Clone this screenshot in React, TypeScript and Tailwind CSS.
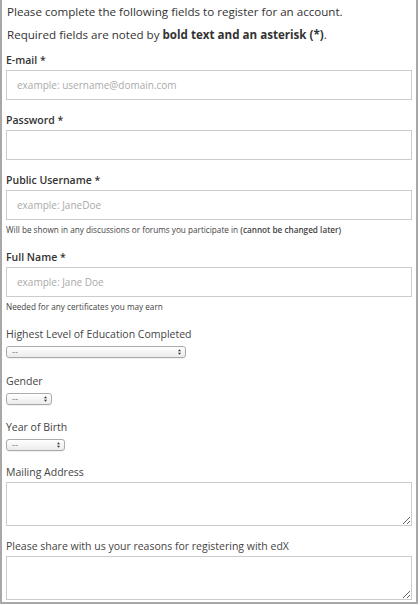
import React from "react";

const font = { fontFamily: '"Open Sans", "Noto Sans", sans-serif' };

function Label({ children, bold }: { children: React.ReactNode; bold?: boolean }) {
    return (
        <label className={`block text-[10.5px] leading-[16px] mb-[2px] ${bold ? "font-semibold text-[#333]" : "text-[#444]"}`}>
            {children}
        </label>
    );
}

function TextField({ label, placeholder, help, className }: { label: string; placeholder?: string; help?: React.ReactNode; className?: string }) {
    return (
        <div className={className}>
            <Label bold>{label}</Label>
            <input
                className="block h-[30px] w-full border border-[#ccc] bg-white px-[10px] text-[10px] text-[#333] placeholder:text-[#aaa] outline-none"
                placeholder={placeholder}
            />
            {help && <div className="text-[8.2px] text-[#444] leading-[12px] mt-[4px]">{help}</div>}
        </div>
    );
}

function FakeSelect({ width }: { width: string }) {
    return (
        <div className={`relative h-[12px] ${width}`}>
            <select className="block h-full w-full appearance-none rounded-[3px] border border-[#aaa] bg-gradient-to-b from-white to-[#ebebeb] py-0 pl-[5px] text-[9px] leading-[10px] text-[#777] outline-none shadow-[0_1px_0_rgba(0,0,0,0.06)]">
                <option>--</option>
            </select>
            <svg className="pointer-events-none absolute right-[5px] top-[3px]" width="3" height="6" viewBox="0 0 3 6">
                <path d="M0 2.3 L1.5 0.3 L3 2.3 Z" fill="#333" />
                <path d="M0 3.7 L1.5 5.7 L3 3.7 Z" fill="#333" />
            </svg>
        </div>
    );
}

export default function App() {
    return (
        <div className="w-[420px] h-[605px] bg-white" style={font}>
            <div className="w-[418px] h-[604px] border-x-2 border-b-2 border-[#a8a8a8] px-[4px] flex flex-col">
                <div className="text-[11.6px] text-[#333] leading-[23px] pl-[1px]">
                    <p>Please complete the following fields to register for an account.</p>
                    <p>
                        Required fields are noted by <span className="font-bold">bold text and an asterisk (*)</span>.
                    </p>
                </div>

                <TextField className="mt-[6px]" label="E-mail *" placeholder="example: username@domain.com" />
                <TextField className="mt-[12px]" label="Password *" />
                <TextField
                    className="mt-[12px]"
                    label="Public Username *"
                    placeholder="example: JaneDoe"
                    help={
                        <>
                            Will be shown in any discussions or forums you participate in{" "}
                            <span className="font-semibold">(cannot be changed later)</span>
                        </>
                    }
                />
                <TextField
                    className="mt-[13px]"
                    label="Full Name *"
                    placeholder="example: Jane Doe"
                    help="Needed for any certificates you may earn"
                />

                <div className="mt-[13px]">
                    <Label>Highest Level of Education Completed</Label>
                    <div className="pt-[2px]">
                        <FakeSelect width="w-[180px]" />
                    </div>
                </div>
                <div className="mt-[15px]">
                    <Label>Gender</Label>
                    <div className="pt-[2px]">
                        <FakeSelect width="w-[46px]" />
                    </div>
                </div>
                <div className="mt-[14px]">
                    <Label>Year of Birth</Label>
                    <div className="pt-[2px]">
                        <FakeSelect width="w-[59px]" />
                    </div>
                </div>
                <div className="mt-[13px]">
                    <Label>Mailing Address</Label>
                    <textarea className="block h-[44px] w-full border border-[#ccc] outline-none resize-y" />
                </div>
                <div className="mt-[12px]">
                    <Label>Please share with us your reasons for registering with edX</Label>
                    <textarea className="block h-[44px] w-full border border-[#ccc] outline-none resize-y" />
                </div>
            </div>
        </div>
    );
}
